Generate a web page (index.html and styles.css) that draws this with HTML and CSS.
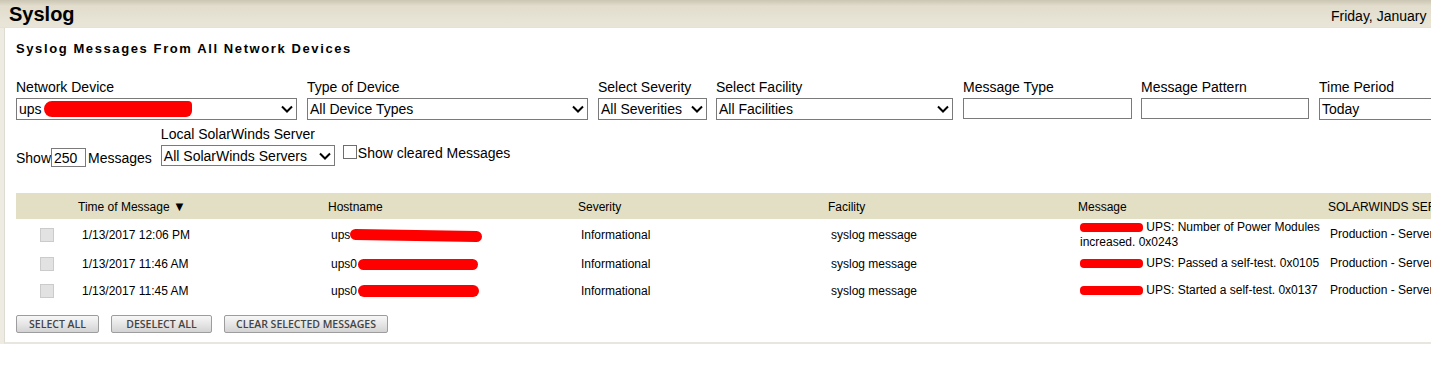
FILE: index.html
```html
<!DOCTYPE html>
<html lang="en">

<head>
    <meta http-equiv="Content-Type" content="text/html; charset=utf-8" />
    <title>Syslog</title>
    <link rel="stylesheet" href="styles.css">
</head>

<body>
    <div class="page-head">
        <h1 class="page-title">Syslog</h1>
        <span class="page-date">Friday, January 13, 2017</span>
    </div>
    <div class="page-wrap">
        <div class="panel">
            <h2 class="panel-title">Syslog Messages From All Network Devices</h2>

            <div class="filters">
                <div class="field f-device">
                    <label>Network Device</label>
                    <div class="dropdown"><span>ups</span><i class="redact r-device"></i>
                        <svg class="chev" width="12" height="8" viewBox="0 0 12 8"><path d="M1 1.5 L6 6.5 L11 1.5" fill="none" stroke="#000" stroke-width="2"/></svg>
                    </div>
                </div>
                <div class="field f-type">
                    <label>Type of Device</label>
                    <div class="dropdown"><span>All Device Types</span>
                        <svg class="chev" width="12" height="8" viewBox="0 0 12 8"><path d="M1 1.5 L6 6.5 L11 1.5" fill="none" stroke="#000" stroke-width="2"/></svg>
                    </div>
                </div>
                <div class="field f-severity">
                    <label>Select Severity</label>
                    <div class="dropdown"><span>All Severities</span>
                        <svg class="chev" width="12" height="8" viewBox="0 0 12 8"><path d="M1 1.5 L6 6.5 L11 1.5" fill="none" stroke="#000" stroke-width="2"/></svg>
                    </div>
                </div>
                <div class="field f-facility">
                    <label>Select Facility</label>
                    <div class="dropdown"><span>All Facilities</span>
                        <svg class="chev" width="12" height="8" viewBox="0 0 12 8"><path d="M1 1.5 L6 6.5 L11 1.5" fill="none" stroke="#000" stroke-width="2"/></svg>
                    </div>
                </div>
                <div class="field f-msgtype">
                    <label>Message Type</label>
                    <input type="text" class="textbox">
                </div>
                <div class="field f-pattern">
                    <label>Message Pattern</label>
                    <input type="text" class="textbox">
                </div>
                <div class="field f-period">
                    <label>Time Period</label>
                    <div class="dropdown"><span>Today</span></div>
                </div>
            </div>

            <div class="filters-2">
                <div class="show-count">
                    Show<input type="text" class="count-box" value="250">Messages
                </div>
                <div class="field f-server">
                    <label>Local SolarWinds Server</label>
                    <div class="dropdown small"><span>All SolarWinds Servers</span>
                        <svg class="chev" width="12" height="8" viewBox="0 0 12 8"><path d="M1 1.5 L6 6.5 L11 1.5" fill="none" stroke="#000" stroke-width="2"/></svg>
                    </div>
                </div>
                <label class="cleared"><span class="check-box"></span>Show cleared Messages</label>
            </div>

            <table class="grid">
                <colgroup>
                    <col class="col-check">
                    <col class="col-data">
                    <col class="col-data">
                    <col class="col-data">
                    <col class="col-data">
                    <col class="col-data">
                    <col class="col-data">
                </colgroup>
                <thead>
                    <tr>
                        <th class="c-check"></th>
                        <th>Time of Message <span class="sort">&#9660;</span></th>
                        <th>Hostname</th>
                        <th>Severity</th>
                        <th>Facility</th>
                        <th>Message</th>
                        <th>SOLARWINDS SERVER</th>
                    </tr>
                </thead>
                <tbody>
                    <tr class="row-1">
                        <td class="c-check"><span class="row-box"></span></td>
                        <td>1/13/2017 12:06 PM</td>
                        <td>ups<i class="redact r-host1"></i></td>
                        <td>Informational</td>
                        <td>syslog message</td>
                        <td class="c-msg"><i class="redact r-ip"></i> UPS: Number of Power Modules<br>increased. 0x0243</td>
                        <td class="c-msg">Production - Servers</td>
                    </tr>
                    <tr>
                        <td class="c-check"><span class="row-box"></span></td>
                        <td>1/13/2017 11:46 AM</td>
                        <td>ups0<i class="redact r-host2"></i></td>
                        <td>Informational</td>
                        <td>syslog message</td>
                        <td class="c-msg"><i class="redact r-ip"></i> UPS: Passed a self-test. 0x0105</td>
                        <td class="c-msg">Production - Servers</td>
                    </tr>
                    <tr>
                        <td class="c-check"><span class="row-box"></span></td>
                        <td>1/13/2017 11:45 AM</td>
                        <td>ups0<i class="redact r-host3"></i></td>
                        <td>Informational</td>
                        <td>syslog message</td>
                        <td class="c-msg"><i class="redact r-ip"></i> UPS: Started a self-test. 0x0137</td>
                        <td class="c-msg">Production - Servers</td>
                    </tr>
                </tbody>
            </table>

            <div class="actions">
                <button type="button" class="btn w-select">SELECT ALL</button>
                <button type="button" class="btn w-deselect">DESELECT ALL</button>
                <button type="button" class="btn w-clear">CLEAR SELECTED MESSAGES</button>
            </div>
        </div>
    </div>
</body>

</html>
```

FILE: styles.css
```css
html {
    overflow: hidden;
}

body {
    margin: 0;
    background-color: #fff;
    color: #000;
    font-family: "Liberation Sans", Arial, sans-serif;
    width: 1600px;
}

.page-head {
    display: flex;
    align-items: center;
    height: 28px;
    padding: 0 0 0 9px;
    background: linear-gradient(#cbc5b3 0, #e2ddcd 6px, #e9e6d9 100%);
    border-bottom: 1px solid #e4e1d6;
    box-sizing: border-box;
}

.page-title {
    margin: 2px 0 0 0;
    font-size: 20px;
    font-weight: bold;
    width: 1322px;
}

.page-date {
    font-size: 14px;
    margin-top: 4px;
    white-space: nowrap;
}

.page-wrap {
    padding: 0 0 0 4px;
    background: linear-gradient(90deg, #eeebe2 0, #eeebe2 4px, #fff 4px);
}

.panel {
    background-color: #fff;
    border-left: 1px solid #dedbd1;
    border-bottom: 2px solid #e8e6de;
    padding: 13px 0 0 11px;
    height: 316px;
    box-sizing: border-box;
}

.panel-title {
    margin: 0;
    font-size: 13px;
    font-weight: bold;
    letter-spacing: 1.6px;
    line-height: 16px;
}

.filters {
    display: flex;
    margin-top: 22px;
}

.field {
    display: flex;
    flex-direction: column;
    margin-right: 10px;
}

.field label {
    font-size: 14px;
    line-height: 16px;
    height: 19px;
    white-space: nowrap;
}

.f-device { width: 281px; }
.f-type { width: 281px; }
.f-severity { width: 109px; margin-right: 9px; }
.f-facility { width: 237px; }
.f-msgtype { width: 169px; margin-right: 9px; }
.f-pattern { width: 168px; }
.f-period { width: 220px; }

.dropdown {
    position: relative;
    display: flex;
    align-items: center;
    height: 22px;
    border: 1px solid #7a7a7a;
    box-sizing: border-box;
    padding-left: 2px;
    font-size: 14px;
    white-space: nowrap;
    overflow: hidden;
}

.dropdown.small {
    height: 21px;
}

.chev {
    position: absolute;
    right: 3px;
    top: 6px;
}

.textbox {
    height: 21px;
    margin: 0;
    border: 1px solid #7a7a7a;
    box-sizing: border-box;
    padding: 0 3px;
    font-family: inherit;
    font-size: 14px;
    outline: none;
}

.filters-2 {
    display: flex;
    align-items: flex-end;
    margin-top: 6px;
}

.show-count {
    font-size: 14px;
    display: flex;
    align-items: center;
    height: 21px;
    margin-bottom: -2px;
    margin-right: 9px;
}

.count-box {
    width: 35px;
    height: 19px;
    margin: 0 2px 0 0;
    border: 1px solid #7a7a7a;
    box-sizing: border-box;
    padding: 0 2px;
    font-family: inherit;
    font-size: 14px;
    outline: none;
}

.f-server {
    width: 174px;
    margin-right: 8px;
}

.cleared {
    display: flex;
    align-items: flex-start;
    font-size: 14px;
    line-height: 16px;
    height: 21px;
}

.check-box {
    display: inline-block;
    width: 14px;
    height: 14px;
    border: 1px solid #6d6d6d;
    box-sizing: border-box;
    margin-right: 1px;
    background-color: #fff;
}

.grid {
    border-collapse: collapse;
    margin-top: 27px;
    table-layout: fixed;
    width: 1558px;
    font-size: 12px;
}

.col-check { width: 58px; }
.col-data { width: 250px; }

.grid th {
    background-color: #e3dfc4;
    height: 24px;
    font-weight: normal;
    text-align: left;
    padding: 2px 0 0 4px;
    white-space: nowrap;
    overflow: hidden;
}

.grid th.c-check {
    padding: 0;
}

.sort {
    font-size: 13px;
    line-height: 12px;
}

.grid td {
    padding: 0 0 0 7px;
    height: 27px;
    white-space: nowrap;
    vertical-align: middle;
}

.grid tr.row-1 td {
    height: 31px;
}

.grid td.c-check {
    padding: 0 0 0 24px;
}

.grid td:nth-child(2) {
    padding-left: 8px;
}

.grid td.c-msg {
    font-size: 12px;
    line-height: 15px;
    padding-left: 6px;
}

.row-box {
    display: block;
    width: 14px;
    height: 14px;
    background-color: #e2e2e2;
    border: 1px solid #cbcbcb;
    box-sizing: border-box;
}

.redact {
    display: inline-block;
    background-color: #fe0000;
    border-radius: 6px;
    vertical-align: middle;
}

.r-device { width: 148px; height: 16px; margin-left: 2px; border-radius: 8px 4px 6px 8px; }
.r-host1 { width: 132px; height: 11px; transform: rotate(1deg); }
.r-host2 { width: 120px; height: 11px; margin-left: 1px; }
.r-host3 { width: 121px; height: 12px; margin-left: 1px; }
.r-ip { width: 63px; height: 9px; border-radius: 4px; }

.actions {
    display: flex;
    margin-top: 11px;
}

.btn {
    height: 18px;
    margin: 0 12px 0 0;
    padding: 0;
    border: 1px solid #9d9d9d;
    border-radius: 2px;
    background: linear-gradient(#f7f7f7, #e6e6e6 50%, #d3d3d3);
    color: #444;
    font-family: "Open Sans", "Liberation Sans", sans-serif;
    font-size: 10.5px;
    font-weight: 600;
    line-height: 16px;
    box-sizing: border-box;
}

.w-select { width: 83px; }
.w-deselect { width: 101px; }
.w-clear { width: 164px; }
```
